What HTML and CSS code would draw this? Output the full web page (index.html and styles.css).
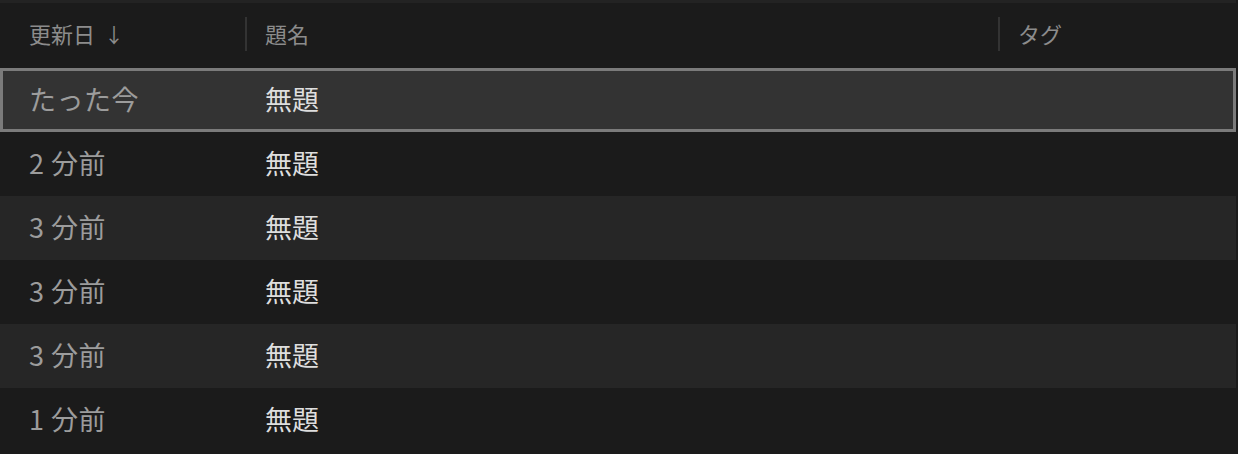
FILE: index.html
```html
<!DOCTYPE html>
<html lang="ja">
<head>
    <meta charset="UTF-8">
    <title>ノート一覧</title>
    <link rel="stylesheet" href="styles.css">
</head>
<body>
    <div class="list">
        <div class="list-head">
            <div class="cell date">更新日 <span class="sort">↓</span></div>
            <div class="cell title sep">題名</div>
            <div class="cell tags sep">タグ</div>
        </div>
        <div class="row selected">
            <div class="cell date">たった今</div>
            <div class="cell title">無題</div>
            <div class="cell tags"></div>
        </div>
        <div class="row">
            <div class="cell date">2 分前</div>
            <div class="cell title">無題</div>
            <div class="cell tags"></div>
        </div>
        <div class="row alt">
            <div class="cell date">3 分前</div>
            <div class="cell title">無題</div>
            <div class="cell tags"></div>
        </div>
        <div class="row">
            <div class="cell date">3 分前</div>
            <div class="cell title">無題</div>
            <div class="cell tags"></div>
        </div>
        <div class="row alt">
            <div class="cell date">3 分前</div>
            <div class="cell title">無題</div>
            <div class="cell tags"></div>
        </div>
        <div class="row">
            <div class="cell date">1 分前</div>
            <div class="cell title">無題</div>
            <div class="cell tags"></div>
        </div>
    </div>
</body>
</html>
```

FILE: styles.css
```css
body { margin: 0; background: #1b1b1b; font-family: "Noto Sans CJK JP", "Noto Sans", sans-serif; }
.list { width: 1236px; border-top: 3px solid #232323; }
.list-head, .row { display: grid; grid-template-columns: 247px 753px 1fr; align-items: center; }
.list-head { height: 65px; box-sizing: border-box; padding-bottom: 5px; color: #8c8c8c; font-size: 22px; }
.row { height: 64px; box-sizing: border-box; padding-bottom: 3px; font-size: 27px; background: #1b1b1b; }
.row.alt { background: #262626; }
.row.selected { background: #333; box-shadow: inset 0 0 0 3px #7b7b7b; }
.cell { padding-left: 18px; white-space: nowrap; position: relative; }
.cell.date { padding-left: 29px; color: #9c9c9c; letter-spacing: 0.5px; }
.list-head .cell.date { color: #8c8c8c; letter-spacing: 0; }
.sort { margin-left: 4px; font-size: 20px; }
.row .title { color: #dedede; }
.sep::before { content: ""; position: absolute; left: -2px; top: 0; bottom: -2px; width: 2px; background: #333; }
```
